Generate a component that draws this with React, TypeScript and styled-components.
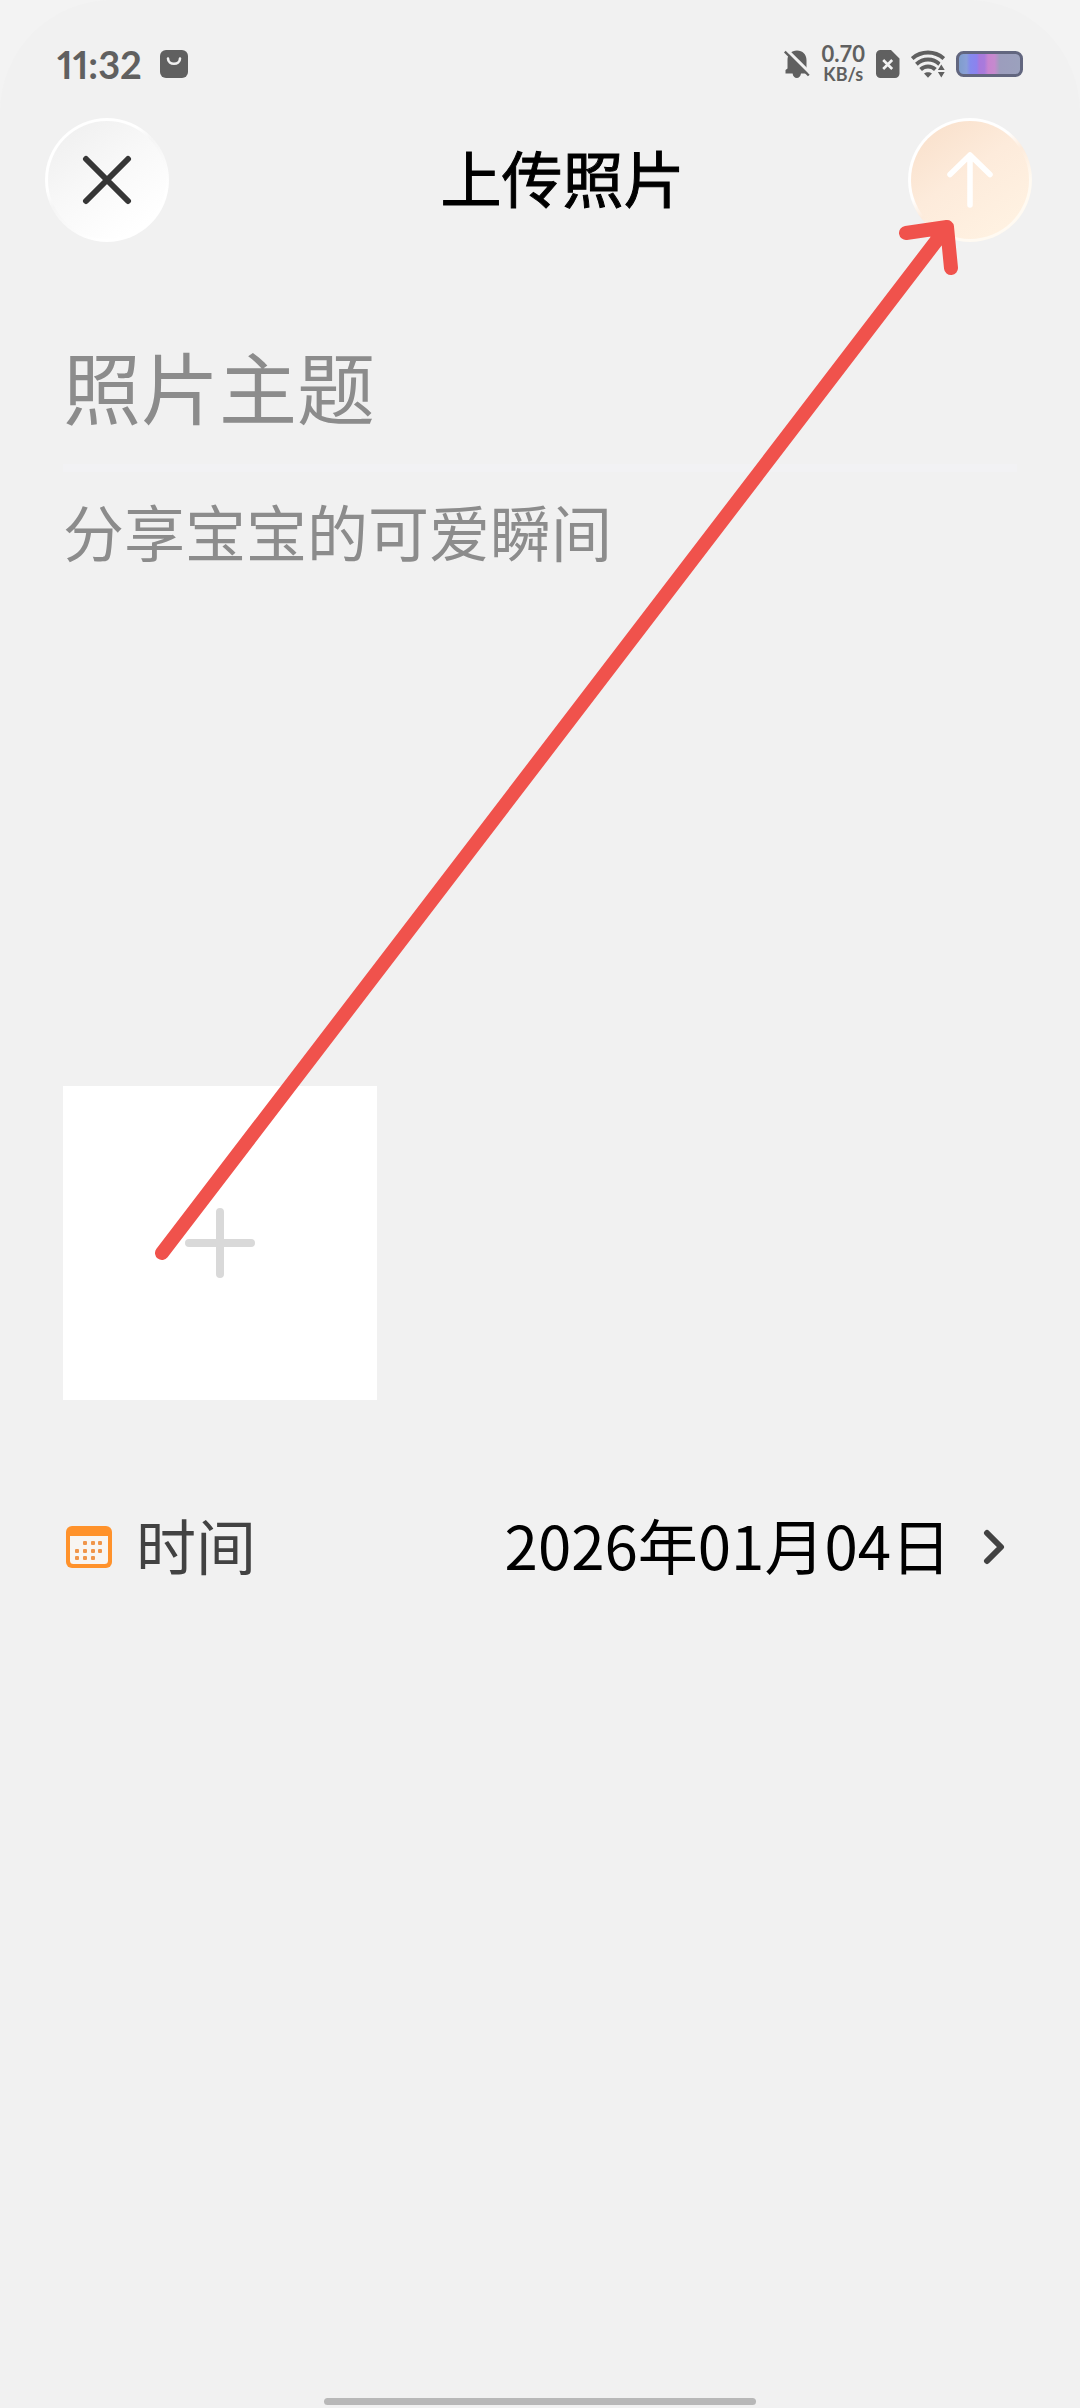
import React, { useState } from "react";
import styled, { createGlobalStyle } from "styled-components";

const GlobalStyle = createGlobalStyle`
  *, *::before, *::after { box-sizing: border-box; }
  body {
    margin: 0;
    background: #f3f3f3;
    font-family: "Noto Sans CJK SC", "Noto Sans", sans-serif;
  }
  button, input, textarea { font: inherit; color: inherit; }
`;

const Screen = styled.div`
  position: relative;
  display: flex;
  flex-direction: column;
  min-height: 100vh;
  background: #f1f1f1;
  border-radius: 112px 112px 0 0;
  overflow: hidden;
`;

const StatusBar = styled.div`
  display: flex;
  align-items: center;
  justify-content: space-between;
  height: 118px;
  padding: 10px 57px 0;
  color: #606060;
  font-family: Lato, "Liberation Sans", sans-serif;
  font-weight: 700;
`;

const StatusGroup = styled.div<{ $gap: number }>`
  display: flex;
  align-items: center;
  gap: ${(p) => p.$gap}px;
`;

const Clock = styled.span`
  font-size: 38px;
  line-height: 40px;
  font-variant-numeric: proportional-nums;
`;

const Speed = styled.div`
  display: flex;
  flex-direction: column;
  align-items: center;
  font-size: 22px;
  line-height: 20px;
`;

const SpeedUnit = styled.span`
  font-size: 18px;
`;

const Header = styled.header`
  display: flex;
  align-items: center;
  padding: 0 48px 0 45px;
`;

const Title = styled.h1`
  flex: 1;
  margin: 0;
  padding: 0 0 6px 48px;
  text-align: center;
  font-size: 61px;
  line-height: 80px;
  font-weight: 400;
  -webkit-text-stroke: 1px #000;
  color: #000;
`;

const RoundButton = styled.button<{ $tone: "plain" | "warm" }>`
  display: grid;
  place-items: center;
  flex: none;
  width: 124px;
  height: 124px;
  padding: 0;
  border: 3px solid transparent;
  border-radius: 50%;
  cursor: pointer;
  background: ${(p) =>
    p.$tone === "warm"
      ? `linear-gradient(145deg, #f9e0cb 5%, #fdebdb 45%, #fff2e2 90%) padding-box,
         linear-gradient(145deg, #ffffff 40%, #fdebdb 52%, #fffaf2 70%) border-box`
      : `linear-gradient(145deg, #efefef 5%, #f8f8f8 45%, #ffffff 85%) padding-box,
         linear-gradient(145deg, #ffffff 35%, #f5f5f5 45%, #ffffff 75%) border-box`};
`;

const Form = styled.main`
  display: flex;
  flex-direction: column;
  align-items: stretch;
  padding: 93px 63px 0;
`;

const ThemeInput = styled.input`
  width: 100%;
  height: 100px;
  padding: 0;
  border: 0;
  outline: 0;
  background: transparent;
  font-size: 78px;
  line-height: 100px;
  color: #222;
  &::placeholder { color: #8c8c8c; opacity: 1; }
`;

const Divider = styled.hr`
  width: 100%;
  height: 8px;
  margin: 29px 0 19px;
  border: 0;
  background: #f2f2f4;
`;

const Description = styled.textarea`
  display: block;
  width: 100%;
  height: 560px;
  padding: 0;
  border: 0;
  outline: 0;
  resize: none;
  background: transparent;
  font-size: 61px;
  line-height: 80px;
  color: #222;
  &::placeholder { color: #8c8c8c; opacity: 1; }
`;

const AddTile = styled.button`
  display: grid;
  place-items: center;
  width: 314px;
  height: 314px;
  margin-top: 35px;
  padding: 0;
  border: 0;
  background: #fff;
  cursor: pointer;
`;

const TimeRow = styled.div`
  display: flex;
  align-items: center;
  justify-content: space-between;
  height: 102px;
  margin-top: 96px;
  padding: 0 12px 0 3px;
  font-size: 60px;
  line-height: 80px;
`;

const TimeLabel = styled.label`
  display: flex;
  align-items: center;
  gap: 24px;
  color: #424242;
`;

const DateButton = styled.button`
  display: flex;
  align-items: center;
  gap: 32px;
  padding: 0;
  border: 0;
  background: transparent;
  color: #000;
  white-space: nowrap;
  cursor: pointer;
`;

const RowText = styled.span`
  padding-bottom: 6px;
`;

const HomeArea = styled.footer`
  display: flex;
  justify-content: center;
  margin-top: auto;
  padding-bottom: 3px;
`;

const HomeBar = styled.div`
  width: 40%;
  height: 7px;
  border-radius: 4px;
  background: #b8b8b8;
`;

const Pointer = styled.svg`
  position: absolute;
  top: 0;
  left: 0;
  pointer-events: none;
`;

const BagIcon = () => (
  <svg width="28" height="28" viewBox="0 0 28 28" aria-hidden="true">
    <rect width="28" height="28" rx="6" fill="#606060" />
    <path d="M8 8.500C8 15.500 20 15.500 20 8.500" fill="none" stroke="#f1f1f1" strokeWidth="2.600" strokeLinecap="round" />
  </svg>
);

const MutedBell = () => (
  <svg width="26" height="30" viewBox="0 0 26 30" aria-hidden="true">
    <path d="M13 1.500c5.600 0 9.500 4 9.500 9.500v8.500l1.500 1.500v3.500h-7c-.5 2.800-2 4.500-4.200 4.500s-3.800-1.700-4.200-4.500H1.500V21L3.500 19.500V11c0-5.500 3.900-9.500 9.500-9.500z" fill="#606060" />
    <path d="M2 .2 26.500 24.500" stroke="#f1f1f1" strokeWidth="3.200" />
    <path d="M.8 2.600 24.800 26.500" stroke="#606060" strokeWidth="2.400" />
  </svg>
);

const SimIcon = () => (
  <svg width="24" height="28" viewBox="0 0 24 28" aria-hidden="true">
    <path d="M4.500 0H15l8.500 8.500v15A4.500 4.500 0 0 1 19 28H4.500A4.500 4.500 0 0 1 0 23.500v-19A4.500 4.500 0 0 1 4.500 0z" fill="#606060" />
    <path d="M7.200 10 16.200 19M16.200 10 7.200 19" stroke="#f1f1f1" strokeWidth="2.600" />
  </svg>
);

const WifiIcon = () => (
  <svg width="34" height="28" viewBox="0 0 34 28" aria-hidden="true">
    <g fill="none" stroke="#606060" strokeWidth="4">
      <path d="M1.200 8.600C10.500.6 23.500.6 32.800 8.600" />
      <path d="M5.400 14.200C12.200 8 21.800 8 28.600 14.200" />
      <path d="M9.600 19.600C14 15.600 20 15.600 24.400 19.600" />
    </g>
    <path d="M13 23.600c2.300-1.800 5.700-1.800 8 0L17 27.800z" fill="#606060" />
    <path d="M29.800 11.500 36 20.500V28H26v-8z" fill="#f1f1f1" />
    <path d="m30.300 14.500 3.400 5.500h-6.800zM30.300 27.500l3.400-5.500h-6.800z" fill="#606060" />
  </svg>
);

const BatteryIcon = () => (
  <svg width="67" height="26" viewBox="0 0 67 26" aria-hidden="true">
    <defs>
      <linearGradient id="charge">
        <stop offset="0" stopColor="#7d9cc9" />
        <stop offset=".14" stopColor="#8aa0d8" />
        <stop offset=".2" stopColor="#8589ee" />
        <stop offset=".3" stopColor="#8c82ee" />
        <stop offset=".34" stopColor="#a878dc" />
        <stop offset=".42" stopColor="#a87bdc" />
        <stop offset=".48" stopColor="#c884d0" />
        <stop offset=".58" stopColor="#c58ace" />
        <stop offset=".66" stopColor="#9c9dbd" />
        <stop offset="1" stopColor="#9ba1bd" />
      </linearGradient>
    </defs>
    <rect x="1.500" y="1.500" width="64" height="23" rx="6" fill="url(#charge)" stroke="#62667f" strokeWidth="3" />
  </svg>
);

const CloseIcon = () => (
  <svg width="50" height="50" viewBox="0 0 50 50" aria-hidden="true">
    <path d="M4 4 46 46M46 4 4 46" stroke="#363636" strokeWidth="6" strokeLinecap="round" />
  </svg>
);

const UpIcon = () => (
  <svg width="46" height="58" viewBox="0 0 46 58" aria-hidden="true">
    <path d="M23 54V4M3 23.500 23 4 43 23.500" fill="none" stroke="#fff" strokeWidth="5.500" strokeLinecap="round" strokeLinejoin="round" />
  </svg>
);

const PlusIcon = () => (
  <svg width="70" height="70" viewBox="0 0 70 70" aria-hidden="true">
    <path d="M35 4v62M4 35h62" stroke="#d9d9d9" strokeWidth="8" strokeLinecap="round" />
  </svg>
);

const calendarDots: [number, number][] = [
  [19, 17], [27, 17], [34, 17],
  [11, 25], [19, 25], [27, 25], [34, 25],
  [11, 32], [19, 32], [27, 32],
];

const CalendarIcon = () => (
  <svg width="46" height="44" viewBox="0 0 46 44" aria-hidden="true">
    <rect x="0" y="1" width="46" height="42" rx="6" fill="#ff922b" />
    <path d="M4 11h38v24.500a3.500 3.500 0 0 1-3.500 3.500h-31A3.500 3.500 0 0 1 4 35.500z" fill="#f8f5f2" />
    {calendarDots.map(([x, y]) => (
      <rect key={`${x}-${y}`} x={x - 2} y={y - 1} width="4" height="4" rx="1" fill="#f0954a" />
    ))}
  </svg>
);

const ChevronIcon = () => (
  <svg width="22" height="36" viewBox="0 0 22 36" aria-hidden="true">
    <path d="M4 4 18 18 4 32" fill="none" stroke="#424242" strokeWidth="6" strokeLinecap="round" strokeLinejoin="round" />
  </svg>
);

export default function App() {
  const [theme, setTheme] = useState("");
  const [description, setDescription] = useState("");

  return (
    <>
      <GlobalStyle />
      <Screen>
        <StatusBar>
          <StatusGroup $gap={18}>
            <Clock>11:32</Clock>
            <BagIcon />
          </StatusGroup>
          <StatusGroup $gap={11}>
            <MutedBell />
            <Speed>
              <span>0.70</span>
              <SpeedUnit>KB/s</SpeedUnit>
            </Speed>
            <SimIcon />
            <WifiIcon />
            <BatteryIcon />
          </StatusGroup>
        </StatusBar>

        <Header>
          <RoundButton type="button" $tone="plain" aria-label="关闭">
            <CloseIcon />
          </RoundButton>
          <Title>上传照片</Title>
          <RoundButton type="button" $tone="warm" aria-label="上传">
            <UpIcon />
          </RoundButton>
        </Header>

        <Form>
          <ThemeInput
            aria-label="照片主题"
            placeholder="照片主题"
            value={theme}
            onChange={(e) => setTheme(e.target.value)}
          />
          <Divider />
          <Description
            aria-label="分享宝宝的可爱瞬间"
            placeholder="分享宝宝的可爱瞬间"
            value={description}
            onChange={(e) => setDescription(e.target.value)}
          />
          <AddTile type="button" aria-label="添加照片">
            <PlusIcon />
          </AddTile>
          <TimeRow>
            <TimeLabel htmlFor="photo-date">
              <CalendarIcon />
              <RowText>时间</RowText>
            </TimeLabel>
            <DateButton id="photo-date" type="button">
              <RowText>2026年01月04日</RowText>
              <ChevronIcon />
            </DateButton>
          </TimeRow>
        </Form>

        <HomeArea>
          <HomeBar />
        </HomeArea>

        <Pointer width="1080" height="1300" viewBox="0 0 1080 1300" aria-hidden="true">
          <path
            d="M162 1253 947 227M906 233 947 227 951 268"
            fill="none"
            stroke="#f0524c"
            strokeWidth="14"
            strokeLinecap="round"
            strokeLinejoin="round"
          />
        </Pointer>
      </Screen>
    </>
  );
}
